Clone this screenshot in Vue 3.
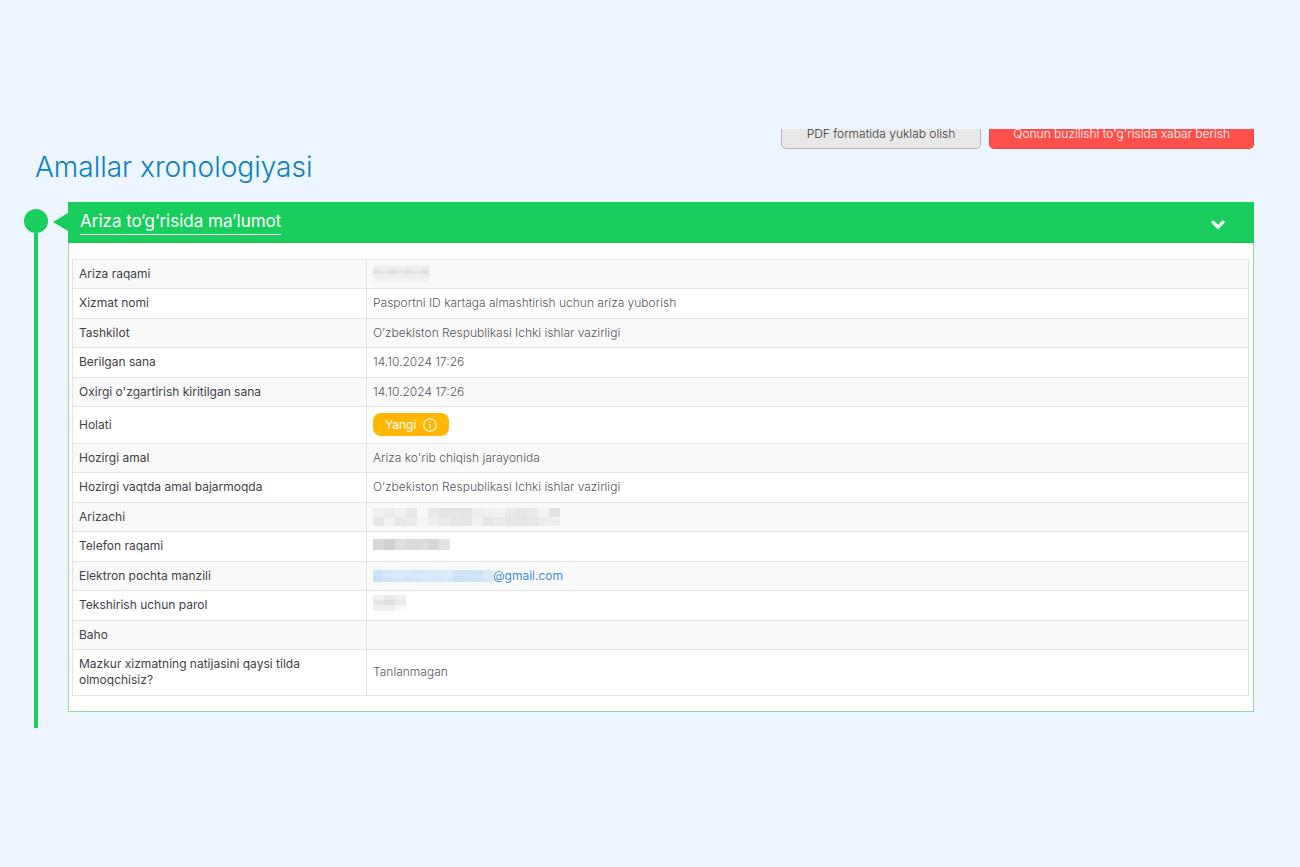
<script setup>
import { ref } from 'vue'

const open = ref(true)

const row = (y, h, w, shades) => shades.map((fill, i) => ({ x: i * w, y, w, h, fill }))

const masks = {
  number: {
    width: 56,
    height: 16,
    cells: [
      ...row(0, 4, 8, ['#ededed', '#efefef', '#ececec', '#efefef', '#ededed', '#eeeeee', '#ebebeb']),
      ...row(4, 4, 8, ['#e2e2e2', '#e5e5e5', '#e0e0e0', '#e6e6e6', '#e2e2e2', '#e5e5e5', '#e1e1e1']),
      ...row(8, 4, 56, ['#eeeeee']),
      ...row(12, 4, 56, ['#f2f2f2'])
    ]
  },
  name: {
    width: 188,
    height: 18,
    cells: [
      ...row(0, 9, 11, ['#efefef', '#ebebeb', '#f0f0f0', '#e8e8e8', '#f7f7f7', '#e8e8e8', '#e5e5e5', '#e6e6e6', '#e5e5e5', '#eeeeee', '#f0f0f0', '#f2f2f2', '#e9e9e9', '#e7e7e7', '#e9e9e9', '#f4f4f4', '#e2e2e2']),
      ...row(9, 9, 11, ['#e6e6e6', '#f1f1f1', '#e7e7e7', '#ebebeb', '#f5f5f5', '#eeeeee', '#ebebeb', '#e6e6e6', '#e5e5e5', '#f0f0f0', '#e6e6e6', '#eaeaea', '#e6e6e6', '#e5e5e5', '#e7e7e7', '#ededed', '#eeeeee'])
    ]
  },
  phone: {
    width: 77,
    height: 14,
    cells: row(0, 11, 11, ['#d8d8d8', '#d0d0d0', '#dedede', '#d9d9d9', '#dcdcdc', '#d6d6d6', '#e3e3e6'])
  },
  email: {
    width: 120,
    height: 12,
    cells: [
      ...row(0, 6, 10, ['#cfe2f6', '#d6e7f8', '#dae9f8', '#d8e8f8', '#d5e6f7', '#d9e8f7', '#dce9f8', '#dceaf8', '#d2e4f6', '#d2e4f6', '#d0e2f6', '#dce9f7']),
      ...row(6, 6, 10, ['#cce0f5', '#d2e5f7', '#d7e7f7', '#d2e4f6', '#d4e6f7', '#dae9f8', '#d8e7f7', '#dae9f8', '#cde1f5', '#cfe2f6', '#d2e4f6', '#d9e8f7'])
    ]
  },
  code: {
    width: 33,
    height: 20,
    cells: [
      ...row(0, 5, 11, ['#eeeeee', '#e9e9e9', '#efefef']),
      ...row(5, 5, 11, ['#e5e5e5', '#e0e0e0', '#e9e9e9']),
      ...row(10, 6, 11, ['#f0f0f0', '#f0f0f0', '#f8f8f8'])
    ]
  }
}

const details = [
  { label: 'Ariza raqami', mask: 'number' },
  { label: 'Xizmat nomi', text: 'Pasportni ID kartaga almashtirish uchun ariza yuborish' },
  { label: 'Tashkilot', text: 'O’zbekiston Respublikasi Ichki ishlar vazirligi' },
  { label: 'Berilgan sana', text: '14.10.2024 17:26' },
  { label: "Oxirgi o'zgartirish kiritilgan sana", text: '14.10.2024 17:26' },
  { label: 'Holati', status: 'Yangi' },
  { label: 'Hozirgi amal', text: "Ariza ko'rib chiqish jarayonida" },
  { label: 'Hozirgi vaqtda amal bajarmoqda', text: 'O’zbekiston Respublikasi Ichki ishlar vazirligi' },
  { label: 'Arizachi', mask: 'name' },
  { label: 'Telefon raqami', mask: 'phone' },
  { label: 'Elektron pochta manzili', mask: 'email', link: '@gmail.com' },
  { label: 'Tekshirish uchun parol', mask: 'code' },
  { label: 'Baho', text: '' },
  { label: 'Mazkur xizmatning natijasini qaysi tilda olmoqchisiz?', text: 'Tanlanmagan' }
]
</script>

<template>
  <main class="page">
    <div class="actions">
      <button type="button" class="btn btn-grey">PDF formatida yuklab olish</button>
      <button type="button" class="btn btn-red">Qonun buzilishi to'g'risida xabar berish</button>
    </div>

    <h1 class="title">Amallar xronologiyasi</h1>

    <section class="timeline">
      <div class="rail"><span class="dot"></span></div>
      <article class="card">
        <header class="card-head">
          <a href="#details" class="card-link">Ariza to‘g‘risida ma’lumot</a>
          <button type="button" class="toggle" aria-label="Ariza to‘g‘risida ma’lumot" :aria-expanded="open" @click="open = !open">
            <svg width="14" height="10" viewBox="0 0 14 10" aria-hidden="true">
              <path d="M2 2.2 L7 7.2 L12 2.2" fill="none" stroke="#fff" stroke-width="3.2" stroke-linecap="round" />
            </svg>
          </button>
        </header>
        <div v-if="open" id="details" class="card-body">
          <table class="details">
            <tbody>
              <tr v-for="item in details" :key="item.label">
                <th scope="row">{{ item.label }}</th>
                <td>
                  <span v-if="item.status" class="badge">
                    {{ item.status }}
                    <svg width="14" height="14" viewBox="0 0 14 14" aria-hidden="true">
                      <circle cx="7" cy="7" r="6.3" fill="none" stroke="#fff" stroke-width="1.1" />
                      <path d="M7 6v4.4" stroke="#fff" stroke-width="1.2" />
                      <circle cx="7" cy="4" r="0.8" fill="#fff" />
                    </svg>
                  </span>
                  <component :is="item.link ? 'a' : 'span'" v-else-if="item.mask" class="masked" :href="item.link ? '#email' : null">
                    <svg
                      :width="masks[item.mask].width"
                      :height="masks[item.mask].height"
                      shape-rendering="crispEdges"
                      aria-hidden="true"
                    >
                      <rect
                        v-for="(c, i) in masks[item.mask].cells"
                        :key="i"
                        :x="c.x"
                        :y="c.y"
                        :width="c.w"
                        :height="c.h"
                        :fill="c.fill"
                      />
                    </svg>
                    <span v-if="item.link">{{ item.link }}</span>
                  </component>
                  <template v-else>{{ item.text }}</template>
                </td>
              </tr>
            </tbody>
          </table>
        </div>
      </article>
    </section>
  </main>
</template>

<style>
body {
  background: #edf6fe;
}
</style>

<style scoped>
.page {
  padding: 129px 46px 0 24px;
  font-family: Inter, "Noto Sans", sans-serif;
  color: #4a4a4a;
}

.actions {
  display: flex;
  justify-content: flex-end;
  gap: 8px;
}

.btn {
  box-sizing: border-box;
  flex: none;
  height: 20px;
  padding: 0 25px 9px;
  border: 1px solid #b4b6b8;
  border-top: 0;
  border-radius: 0 0 5px 5px;
  font: 300 12px/10px Inter, "Noto Sans", sans-serif;
  cursor: pointer;
}

.btn-grey {
  background: #e8e8e8;
  color: #3c3c3c;
}

.btn-red {
  padding: 0 23px 9px;
  background: #ff504c;
  border-color: #f0443f;
  color: #fff;
}

.title {
  margin: 0 0 17px 11px;
  font-size: 28px;
  font-weight: 300;
  line-height: 36px;
  color: #0a80c2;
}

.timeline {
  display: flex;
  gap: 20px;
}

.rail {
  flex: none;
  display: flex;
  flex-direction: column;
  align-items: center;
  width: 24px;
  padding-top: 7px;
}

.rail::after {
  content: "";
  flex: 1;
  width: 4px;
  background: #19ce5c;
}

.dot {
  width: 24px;
  height: 24px;
  border-radius: 50%;
  background: #19ce5c;
}

.card {
  flex: 1;
  min-width: 0;
  margin-bottom: 16px;
  border: 1px solid #8fdba2;
  border-top: 0;
  background: #fff;
}

.card-head {
  position: relative;
  display: flex;
  justify-content: space-between;
  align-items: center;
  height: 40px;
  margin: 0 -1px;
  padding: 0 29px 0 12px;
  background: #19ce5c;
  border-bottom: 1px solid #17bd54;
}

.card-head::before {
  content: "";
  position: absolute;
  right: 100%;
  top: 11px;
  border: 9px solid transparent;
  border-right: 15px solid #19ce5c;
  border-left: 0;
}

.card-link {
  margin-bottom: 1px;
  padding-bottom: 1px;
  border-bottom: 1px solid #fff;
  color: #fff;
  font-size: 17px;
  line-height: 24px;
  text-decoration: none;
}

.toggle {
  display: flex;
  margin-top: 6px;
  padding: 0;
  border: 0;
  background: none;
  cursor: pointer;
}

.card-body {
  padding: 16px 4px 15px 3px;
}

.details {
  width: 100%;
  border-collapse: collapse;
  table-layout: fixed;
  font-size: 12px;
  line-height: 16px;
}

.details th,
.details td {
  padding: 6px;
  border: 1px solid #e3e3e3;
  text-align: left;
  vertical-align: middle;
}

.details th {
  width: 281px;
  font-weight: 400;
  color: #3f4246;
}

.details td {
  height: 16px;
  font-weight: 300;
  color: #55585c;
}

.details tr:nth-child(odd) {
  background: #f9f9f9;
}

.details tr:nth-child(even) th,
.details tr:nth-child(even) td {
  padding-bottom: 7px;
}

.badge {
  display: flex;
  align-items: center;
  gap: 7px;
  width: max-content;
  height: 23px;
  padding: 0 12px;
  border-radius: 8px;
  background: #ffb703;
  color: #fff;
  font-weight: 400;
}

.masked {
  display: flex;
  align-items: center;
  height: 16px;
  color: #3f8fd8;
  font-weight: 400;
  text-decoration: none;
}

.masked svg {
  flex: none;
}
</style>
